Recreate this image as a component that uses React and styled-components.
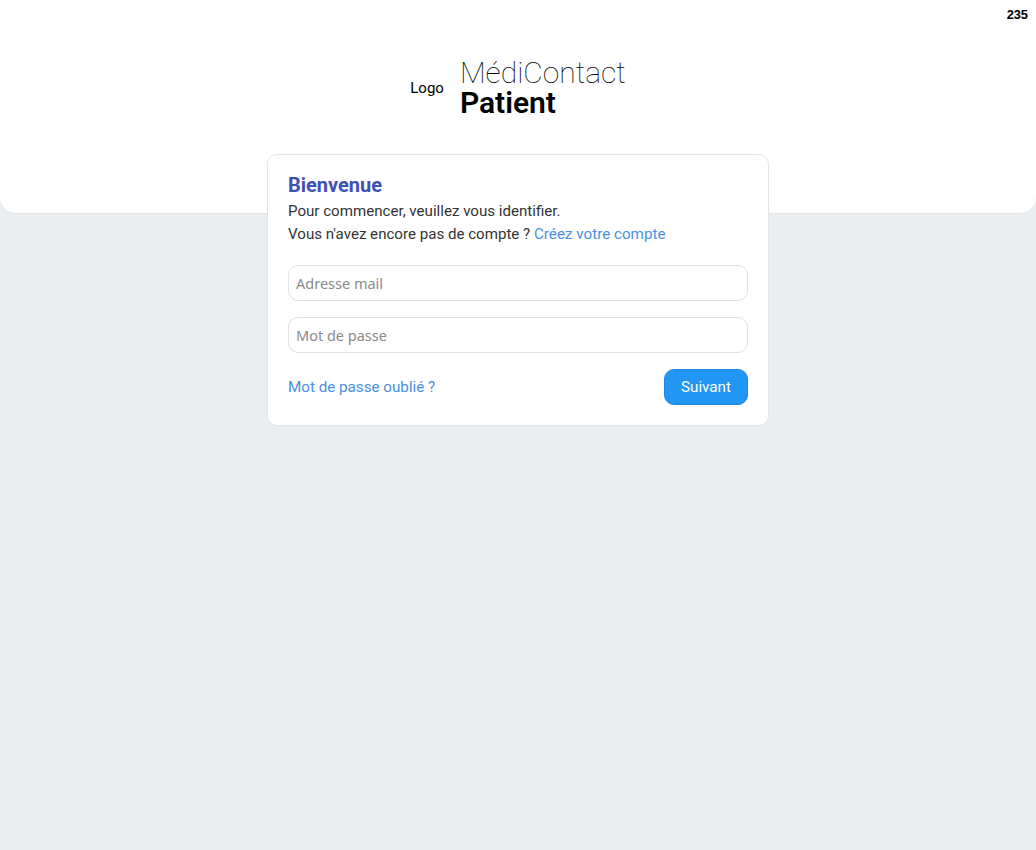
import React from "react";
import styled, { createGlobalStyle } from "styled-components";

const GlobalStyle = createGlobalStyle`
  html, body {
    margin: 0;
    padding: 0;
    height: 100%;
  }
  body {
    background: #eaeef1;
    font-family: Roboto, "Liberation Sans", sans-serif;
  }
`;

const Page = styled.div`
  position: relative;
  min-height: 850px;
  background: #eaeef1;
`;

const Counter = styled.div`
  position: absolute;
  top: 7px;
  right: 8px;
  font-family: "Liberation Sans", Arial, sans-serif;
  font-size: 12.8px;
  line-height: 15px;
  font-weight: 700;
  color: #000;
`;

const Header = styled.header`
  box-sizing: border-box;
  height: 214px;
  padding-top: 57px;
  background: #fff;
  border-bottom: 1px solid #e3e6e8;
  border-radius: 0 0 16px 16px;
  display: flex;
  justify-content: center;
  align-items: flex-start;
`;

const Brand = styled.div`
  display: flex;
  align-items: center;
  gap: 16px;
`;

const Logo = styled.span`
  margin-top: 1px;
  font-size: 15px;
  line-height: 18px;
  color: #000;
`;

const BrandText = styled.div`
  display: flex;
  flex-direction: column;
`;

const AppName = styled.span`
  font-size: 30px;
  line-height: 31px;
  font-weight: 100;
  color: #000;
`;

const Role = styled.span`
  font-size: 30px;
  line-height: 29px;
  font-weight: 600;
  color: #000;
`;

const Card = styled.main`
  box-sizing: border-box;
  width: 502px;
  margin: -60px auto 0;
  padding: 20px;
  position: relative;
  background: #fff;
  border: 1px solid #e3e6e8;
  border-radius: 10px;
`;

const Title = styled.h1`
  margin: 0;
  font-size: 20px;
  line-height: 20px;
  font-weight: 700;
  color: #3f51b5;
`;

const Intro = styled.p`
  margin: 5px 0 0;
  font-size: 15.1px;
  line-height: 23px;
  color: #333;
`;

const TextLink = styled.a`
  font-size: 15.2px;
  color: #4a90e2;
  text-decoration: none;
`;

const Form = styled.form`
  display: flex;
  flex-direction: column;
  gap: 16px;
  margin-top: 19px;
`;

const Input = styled.input`
  box-sizing: border-box;
  width: 100%;
  height: 36px;
  padding: 0 7px;
  background: #fff;
  border: 1px solid #dfe1e3;
  border-radius: 10px;
  outline: none;
  font-family: "Noto Sans", sans-serif;
  font-size: 14.5px;
  color: #212529;

  &::placeholder {
    color: #8a8a8a;
    opacity: 1;
  }
`;

const Actions = styled.div`
  display: flex;
  justify-content: space-between;
  align-items: center;
`;

const SubmitButton = styled.button`
  box-sizing: border-box;
  width: 84px;
  height: 36px;
  background: #2196f3;
  border: 1px solid #1e88e5;
  border-radius: 10px;
  font-family: Roboto, sans-serif;
  font-size: 15.2px;
  font-weight: 450;
  color: #fff;
`;

export default function App() {
  return (
    <Page>
      <GlobalStyle />
      <Counter>235</Counter>
      <Header>
        <Brand>
          <Logo>Logo</Logo>
          <BrandText>
            <AppName>MédiContact</AppName>
            <Role>Patient</Role>
          </BrandText>
        </Brand>
      </Header>
      <Card>
        <Title>Bienvenue</Title>
        <Intro>
          Pour commencer, veuillez vous identifier.
          <br />
          Vous n'avez encore pas de compte ? <TextLink href="#">Créez votre compte</TextLink>
        </Intro>
        <Form onSubmit={(e) => e.preventDefault()}>
          <Input type="email" placeholder="Adresse mail" />
          <Input type="password" placeholder="Mot de passe" />
          <Actions>
            <TextLink href="#">Mot de passe oublié ?</TextLink>
            <SubmitButton type="submit">Suivant</SubmitButton>
          </Actions>
        </Form>
      </Card>
    </Page>
  );
}
